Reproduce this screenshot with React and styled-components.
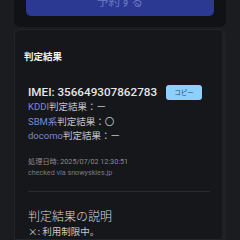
import React from "react";
import styled, { createGlobalStyle } from "styled-components";

const GlobalStyle = createGlobalStyle`
  html, body {
    margin: 0;
    padding: 0;
    background: #1b1c20;
    overflow: hidden;
  }
  body {
    font-family: "Roboto", "Noto Sans CJK JP", sans-serif;
  }
`;

const Page = styled.div`
  width: 240px;
  height: 240px;
  padding: 0 14px;
  box-sizing: border-box;
  display: flex;
  flex-direction: column;
  gap: 2px;
  overflow: hidden;
`;

const BookingCard = styled.div`
  background: #111216;
  border-radius: 0 0 6px 6px;
  padding: 0 12px 11px;
  margin-top: -18px;
`;

const BookButton = styled.div`
  height: 34px;
  box-sizing: border-box;
  padding-top: 4px;
  background: #2c3993;
  border-radius: 5px;
  display: flex;
  align-items: center;
  justify-content: center;
  color: #6d79c2;
  font-size: 11.5px;
  font-family: "Noto Sans CJK JP", sans-serif;
`;

const ResultCard = styled.div`
  background: #16171b;
  border: 1px solid #232428;
  border-right: 4px solid #202125;
  border-radius: 6px 6px 0 0;
  padding: 19px 12px 0 9px;
  flex: 1;
`;

const CardTitle = styled.div`
  font-family: "Noto Sans CJK JP", sans-serif;
  font-size: 9.5px;
  line-height: 14px;
  font-weight: 700;
  color: #f0f0f0;
`;

const ResultBody = styled.div`
  padding-left: 4px;
  margin-top: 21px;
`;

const ImeiRow = styled.div`
  display: flex;
  align-items: center;
  gap: 9px;
  height: 16px;
`;

const Imei = styled.div`
  font-size: 11.7px;
  font-weight: 500;
  color: #e6e6e6;
`;

const CopyButton = styled.div`
  width: 36px;
  height: 15px;
  border-radius: 3px;
  background: #8dd0fb;
  color: #294777;
  font-size: 6.5px;
  font-family: "Noto Sans CJK JP", sans-serif;
  display: flex;
  align-items: center;
  justify-content: center;
`;

const Line = styled.div`
  font-size: 9.5px;
  line-height: 14.7px;
  color: #c2c2c4;
`;

const Carrier = styled.span`
  color: #7c86d6;
`;

const MetaBlock = styled.div`
  margin-top: 13px;
`;

const Meta = styled.div`
  font-size: 7.2px;
  line-height: 10.5px;
  color: ${(p) => p.color || "#8a8a8e"};
`;

const Divider = styled.div`
  height: 1px;
  background: #2a2b30;
  margin-top: 13px;
  width: 182px;
`;

const SubTitle = styled.div`
  margin-top: 15px;
  font-family: "Noto Sans CJK JP", sans-serif;
  font-size: 12px;
  line-height: 17px;
  font-weight: 300;
  color: #d6d6d8;
`;

const Note = styled.div`
  font-family: "Noto Sans CJK JP", sans-serif;
  font-size: 9.5px;
  line-height: 14px;
  color: #c8c8ca;
`;

export default function App() {
  return (
    <>
      <GlobalStyle />
      <Page>
        <BookingCard>
          <BookButton>予約する</BookButton>
        </BookingCard>
        <ResultCard>
          <CardTitle>判定結果</CardTitle>
          <ResultBody>
            <ImeiRow>
              <Imei>IMEI: 356649307862783</Imei>
              <CopyButton>コピー</CopyButton>
            </ImeiRow>
            <Line>
              <Carrier>KDDI</Carrier>判定結果：ー
            </Line>
            <Line>
              <Carrier>SBM系</Carrier>判定結果：〇
            </Line>
            <Line>
              <Carrier>docomo</Carrier>判定結果：ー
            </Line>
            <MetaBlock>
              <Meta>処理日時: 2025/07/02 12:30:51</Meta>
              <Meta color="#7a7a80">checked via snowyskies.jp</Meta>
            </MetaBlock>
            <Divider />
            <SubTitle>判定結果の説明</SubTitle>
            <Note>×: 利用制限中。</Note>
          </ResultBody>
        </ResultCard>
      </Page>
    </>
  );
}
